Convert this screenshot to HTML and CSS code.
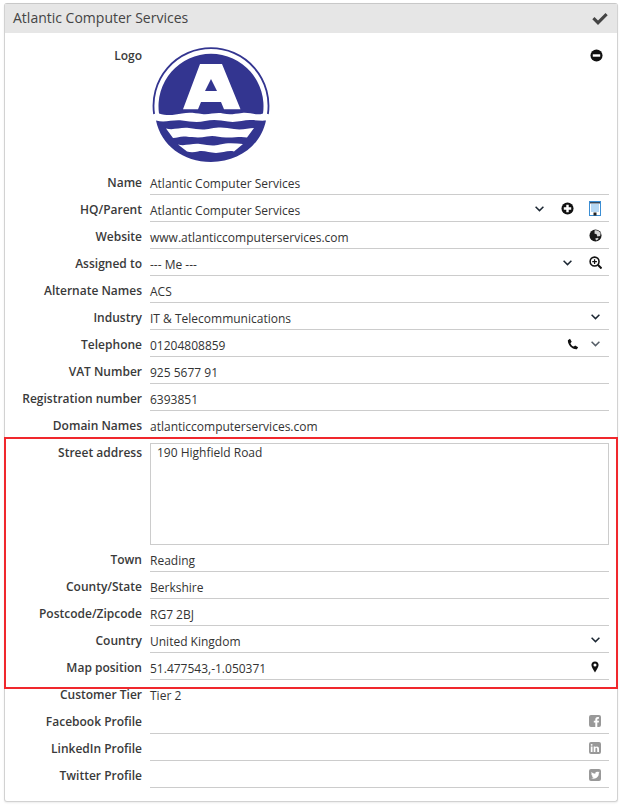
FILE: index.html
```html
<!DOCTYPE html>
<html lang="en">
<head>
<meta charset="utf-8">
<title>Atlantic Computer Services</title>
<link rel="stylesheet" href="styles.css">
</head>
<body>
<svg class="defs" width="0" height="0" aria-hidden="true">
  <symbol id="chev" viewBox="0 0 9 6"><path d="M.6.8 4.500 4.600 8.400.8" fill="none" stroke="currentColor" stroke-width="1.500"/></symbol>
</svg>
<main class="panel">
  <header class="panel-head">
    <h1 class="panel-title">Atlantic Computer Services</h1>
    <svg class="check" viewBox="0 0 16 12"><path d="M6 12 0.300 6.300 2.500 4.100 6 7.600 13.500.1 15.700 2.300Z" fill="#444"/></svg>
  </header>
  <div class="panel-body">
    <div class="row logo-row">
      <div class="label">Logo</div>
      <div class="logo-cell">
        <svg class="logo" viewBox="0 0 118 118">
          <path d="M2.100 69A57.500 57.500 0 1 1 115.900 69" fill="none" stroke="#333590" stroke-width="1.800"/>
          <path d="M7 68.500A52.500 52.500 0 1 1 111 68.500C104 71 98 67 90 68C82 69 78 70 71 68.500C64 67 57 70 50 69C43 68 37 67 30 68.500C22 70 15 71 7 68.500Z" fill="#333590"/>
          <path d="M48 19H70L88.500 64.300H72L69 57H49L46 64.300H31Z" fill="#fff"/>
          <path d="M59 34 65 46H53Z" fill="#333590"/>
          <path d="M4 75.500C13 78 20 74.500 30 75.500C38 76.500 45 78 53 76C61 74 68 75 76 76.500C84 78 91 75 98 75C104 75 108 76 114 75.500C109 100 87 117 59 117C31 117 9 100 4 75.500Z" fill="#333590"/>
          <path d="M14 83.500C22 85.500 28 82 37 83C45 84 50 85.500 59 83.500C68 81.500 74 82.500 82 84C90 85.500 96 83 102 83L95 92.500C88 91 82 93 74 92.500C66 92 62 90 55 91.500C48 93 42 92.500 34 91.500C28 91 26 92.500 21 93Z" fill="#fff"/>
          <path d="M26 99.500C33 101.500 40 98 48 99C56 100 60 101.500 68 99.500C76 97.500 84 98.500 91 99L82 106.500C76 105 71 108 64 108C57 108 52 105 46 106.500C42 107.500 38 107.500 35 106.500Z" fill="#fff"/>
        </svg>
        <span class="slot"><svg class="ico" viewBox="0 0 14 14"><circle cx="7" cy="7" r="6.500" fill="#111"/><rect x="3" y="5.700" width="8" height="2.600" fill="#fff"/></svg></span>
      </div>
    </div>

    <div class="row"><div class="label">Name</div><div class="field"><span class="value">Atlantic Computer Services</span></div></div>

    <div class="row"><div class="label">HQ/Parent</div><div class="field"><span class="value">Atlantic Computer Services</span>
      <span class="slot"><svg class="chev"><use href="#chev"/></svg></span>
      <span class="slot"><svg class="ico" viewBox="0 0 14 14"><circle cx="7" cy="7" r="6.500" fill="#111"/><path d="M5.700 3H8.300V5.700H11V8.300H8.300V11H5.700V8.300H3V5.700H5.700Z" fill="#fff"/></svg></span>
      <span class="slot"><svg class="bld" viewBox="0 0 12 15"><rect x=".5" y=".5" width="11" height="14" fill="#fff" stroke="#3b8ed4"/><rect x="1" y="1" width="10" height="1.500" fill="#34485c"/><path d="M2 4H10M2 6H10M2 8H10M2 10H10" stroke="#6fb2ea" stroke-width="1.200"/><rect x="4.500" y="11.500" width="3" height="3" fill="#222"/></svg></span>
    </div></div>

    <div class="row"><div class="label">Website</div><div class="field"><span class="value">www.atlanticcomputerservices.com</span>
      <span class="slot"><svg class="ico" viewBox="0 0 14 14"><circle cx="7" cy="7" r="6.500" fill="#1a1a1a"/><path d="M6 1.500C8 .8 11 1.800 12.500 4.500L12 7.500 9 8 8 5.500 6 5ZM6.500 10.500 9 9.500 10.500 10.500 8 12.500Z" fill="#d8d8d8"/></svg></span>
    </div></div>

    <div class="row"><div class="label">Assigned to</div><div class="field"><span class="value">--- Me ---</span>
      <span class="slot"><svg class="chev"><use href="#chev"/></svg></span>
      <span class="slot"><svg class="ico" viewBox="0 0 14 14"><circle cx="6" cy="6" r="4.800" fill="none" stroke="#111" stroke-width="1.700"/><path d="M9.500 9.500 13.500 13.500" stroke="#111" stroke-width="2.200"/><path d="M3.500 6H8.500M6 3.500V8.500" stroke="#111" stroke-width="1.300"/></svg></span>
    </div></div>

    <div class="row"><div class="label">Alternate Names</div><div class="field"><span class="value">ACS</span></div></div>

    <div class="row"><div class="label">Industry</div><div class="field"><span class="value">IT &amp; Telecommunications</span>
      <span class="slot"><svg class="chev"><use href="#chev"/></svg></span>
    </div></div>

    <div class="row"><div class="label">Telephone</div><div class="field"><span class="value">01204808859</span>
      <span class="slot slot-narrow"><svg class="phone" viewBox="0 0 14 14"><path d="M1 2.500 3.500 1 5.500 4.500 4 6C4.800 8 6.200 9.300 8 10L9.500 8.700 13 10.700 11.500 13C6 13.500 .8 8 1 2.500Z" fill="#111"/></svg></span>
      <span class="slot"><svg class="chev thin"><use href="#chev"/></svg></span>
    </div></div>

    <div class="row"><div class="label">VAT Number</div><div class="field"><span class="value">925 5677 91</span></div></div>
    <div class="row"><div class="label">Registration number</div><div class="field"><span class="value">6393851</span></div></div>
    <div class="row"><div class="label">Domain Names</div><div class="field"><span class="value">atlanticcomputerservices.com</span></div></div>

    <div class="row address-row"><div class="label">Street address</div><div class="address-box">190 Highfield Road</div></div>

    <div class="row"><div class="label">Town</div><div class="field"><span class="value">Reading</span></div></div>
    <div class="row"><div class="label">County/State</div><div class="field"><span class="value">Berkshire</span></div></div>
    <div class="row"><div class="label">Postcode/Zipcode</div><div class="field"><span class="value">RG7 2BJ</span></div></div>
    <div class="row"><div class="label">Country</div><div class="field"><span class="value">United Kingdom</span>
      <span class="slot"><svg class="chev"><use href="#chev"/></svg></span>
    </div></div>
    <div class="row"><div class="label">Map position</div><div class="field"><span class="value">51.477543,-1.050371</span>
      <span class="slot"><svg class="pin" viewBox="0 0 10 14"><path fill-rule="evenodd" d="M5 0C7.800 0 9.500 2 9.500 4.500C9.500 7 6.500 11 5 14C3.500 11 .5 7 .5 4.500C.5 2 2.200 0 5 0ZM5 2.700A1.900 1.900 0 1 0 5 6.500A1.900 1.900 0 1 0 5 2.700Z" fill="#111"/></svg></span>
    </div></div>
    <div class="row"><div class="label">Customer Tier</div><div class="field field-plain"><span class="value">Tier 2</span></div></div>

    <div class="row"><div class="label">Facebook Profile</div><div class="field"><span class="value"></span>
      <span class="slot"><svg class="social" viewBox="0 0 12 12"><path d="M2 0H10A2 2 0 0 1 12 2V10A2 2 0 0 1 10 12H8.300V7.500H9.800L10 5.700H8.300V4.700C8.300 4.100 8.500 3.800 9.100 3.800H10V2.200C9.700 2.200 9.200 2.100 8.600 2.100C7.200 2.100 6.300 3 6.300 4.500V5.700H4.800V7.500H6.300V12H2A2 2 0 0 1 0 10V2A2 2 0 0 1 2 0Z" fill="#999"/></svg></span>
    </div></div>
    <div class="row"><div class="label">LinkedIn Profile</div><div class="field"><span class="value"></span>
      <span class="slot"><svg class="social" viewBox="0 0 12 12"><path fill-rule="evenodd" d="M2 0H10A2 2 0 0 1 12 2V10A2 2 0 0 1 10 12H2A2 2 0 0 1 0 10V2A2 2 0 0 1 2 0ZM1.800 4.500V10H3.500V4.500ZM2.650 1.900A.95.95 0 1 0 2.650 3.800A.95.95 0 1 0 2.650 1.900ZM4.700 4.500V10H6.400V7C6.400 6.200 6.700 5.800 7.300 5.800C7.900 5.800 8.200 6.200 8.200 7V10H10V6.800C10 5.100 9.100 4.400 8 4.400C7.200 4.400 6.700 4.700 6.400 5.200V4.500Z" fill="#999"/></svg></span>
    </div></div>
    <div class="row"><div class="label">Twitter Profile</div><div class="field"><span class="value"></span>
      <span class="slot"><svg class="social" viewBox="0 0 12 12"><path fill-rule="evenodd" d="M2 0H10A2 2 0 0 1 12 2V10A2 2 0 0 1 10 12H2A2 2 0 0 1 0 10V2A2 2 0 0 1 2 0ZM8 2.700C7 2.700 6.100 3.600 6.300 4.700C4.800 4.600 3.500 3.900 2.600 2.900C2.100 3.800 2.400 4.800 3.100 5.300C2.800 5.300 2.500 5.200 2.300 5.100C2.300 6 3 6.800 3.800 7C3.500 7.100 3.300 7.100 3 7C3.300 7.800 4 8.300 4.800 8.300C4 8.900 3.100 9.100 2.100 9C6 11 10 8.300 9.800 4.300C10.200 4 10.500 3.700 10.700 3.300C10.300 3.500 10 3.600 9.600 3.600C10 3.400 10.300 3 10.400 2.600C10 2.800 9.600 3 9.200 3.100C8.900 2.800 8.500 2.700 8 2.700Z" fill="#999"/></svg></span>
    </div></div>
  </div>
  <div class="highlight"></div>
</main>
</body>
</html>
```

FILE: styles.css
```css
* { box-sizing: border-box; }
html, body { margin: 0; padding: 0; background: #fff; }
body {
  font-family: "Open Sans", "Liberation Sans", sans-serif;
  font-size: 12px;
  color: #333;
  padding: 3px 3px 5px 4px;
}
.defs { position: absolute; }
.panel {
  position: relative;
  width: 614px;
  height: 799px;
  border: 1px solid #d2d2d2;
  border-top-color: #c8c8c8;
  border-radius: 3px;
  box-shadow: 0 1px 2px rgba(0, 0, 0, .08);
}
.panel-head {
  height: 29px;
  background: #e6e6e6;
  display: flex;
  align-items: center;
  justify-content: space-between;
  padding: 0 9px 0 8px;
}
.panel-title {
  margin: 0;
  padding-bottom: 2px;
  font-size: 14px;
  font-weight: 400;
  color: #444;
}
.check { width: 16px; height: 12px; display: block; }
.row {
  display: grid;
  grid-template-columns: 137px 459px;
  column-gap: 8px;
  height: 27px;
}
.label {
  text-align: right;
  line-height: 16px;
  padding-top: 7px;
  color: #3a3a3a;
  font-weight: 600;
  white-space: nowrap;
}
.field {
  display: flex;
  height: 27px;
  border-bottom: 1px solid #ccc;
}
.field-plain { border-bottom: 0; }
.value {
  flex: 1;
  line-height: 16px;
  padding-top: 8px;
  color: #333;
  white-space: nowrap;
}
.slot {
  width: 28px;
  height: 26px;
  flex: none;
  display: flex;
  align-items: center;
  justify-content: center;
  padding-top: 1px;
  color: #1c2733;
}
.slot-narrow { width: 16px; }
.ico { width: 13px; height: 13px; display: block; }
.phone { width: 12px; height: 12px; display: block; }
.social { width: 12px; height: 12px; display: block; }
.chev { width: 9px; height: 6px; display: block; margin-top: 1px; }
.thin { opacity: .75; }
.bld { width: 12px; height: 15px; display: block; }
.pin { width: 8px; height: 12px; display: block; }
.logo-row { height: 135px; }
.logo-row .label { padding-top: 15px; }
.logo-cell {
  display: flex;
  justify-content: space-between;
  align-items: flex-start;
  padding-top: 12px;
}
.logo { width: 118px; height: 118px; display: block; margin-left: 2px; }
.logo-cell .slot { margin-top: -3px; margin-right: -1px; }
.address-row { height: 107px; }
.address-box {
  margin-top: 5px;
  height: 102px;
  border: 1px solid #ccc;
  padding: 1px 6px;
  line-height: 16px;
}
.highlight {
  position: absolute;
  left: -1px;
  right: -1px;
  top: 433px;
  height: 252px;
  border: 2px solid #f0282d;
  pointer-events: none;
}
```
